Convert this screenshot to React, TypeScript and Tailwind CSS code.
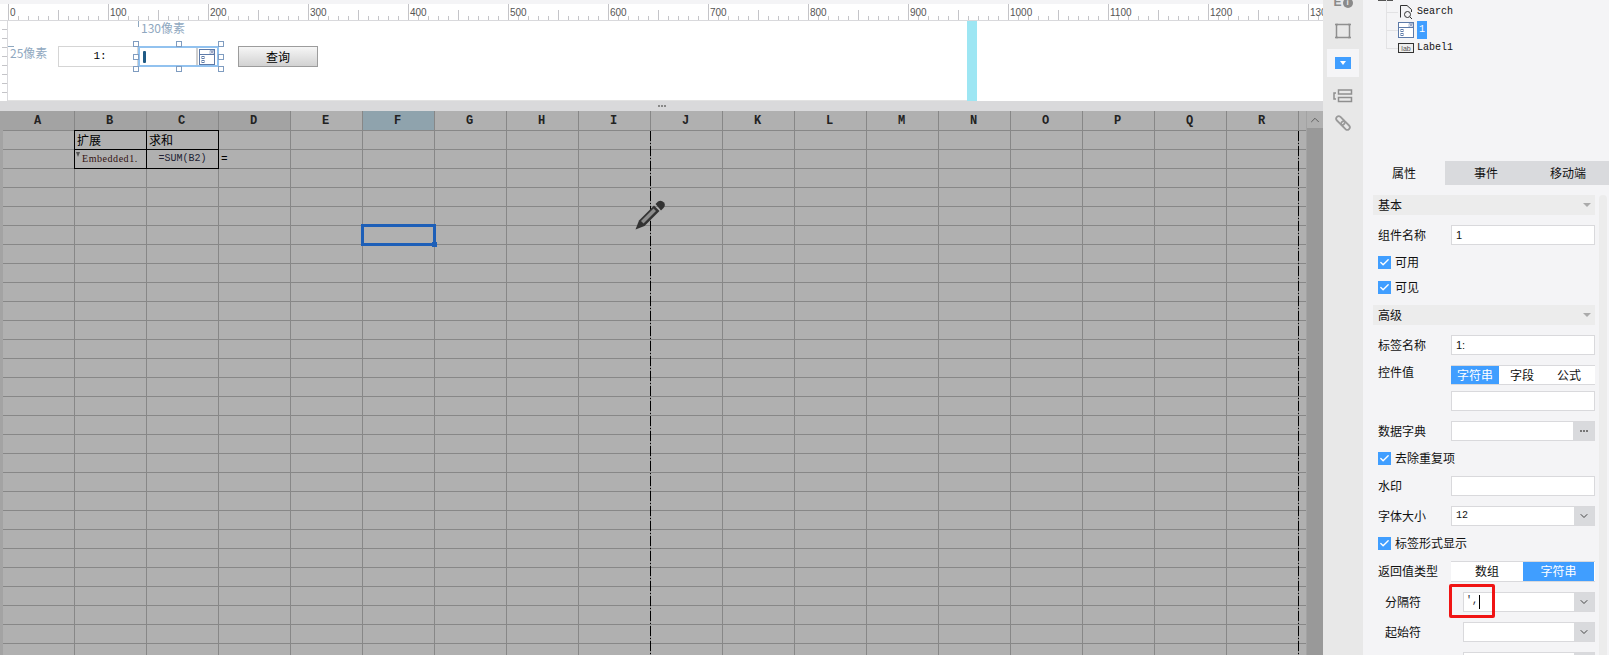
import { Check, ChevronDown, ChevronUp } from "lucide-react";

const cjk = "font-['Noto_Sans_CJK_SC',sans-serif]";
const mono = "font-['Liberation_Mono','Noto_Sans_CJK_SC',monospace]";
const dashDot =
  "absolute bottom-0 top-[20px] w-px bg-[repeating-linear-gradient(to_bottom,#000_0,#000_10px,transparent_10px,transparent_12px,#000_12px,#000_13px,transparent_13px,transparent_15px)]";

const columns = ["A", "B", "C", "D", "E", "F", "G", "H", "I", "J", "K", "L", "M", "N", "O", "P", "Q", "R"];
const rowCount = 28;
const rulerLabels = [0, 100, 200, 300, 400, 500, 600, 700, 800, 900, 1000, 1100, 1200, 1300];
const ticks = Array.from({ length: 132 }, (_, i) => i);

function TopRuler() {
  return (
    <div className="relative h-[17px] overflow-hidden border-b border-[#d9d9dc] bg-white pl-2">
      <div className="flex h-full">
        {ticks.map((t) => (
          <div key={t} className="relative w-[10px] shrink-0">
            <span
              className={
                t % 10 === 0
                  ? "absolute bottom-0 left-0 h-[16px] w-px bg-[#c4c4c8]"
                  : t % 5 === 0
                    ? "absolute bottom-0 left-0 h-[10px] w-px bg-[#c4c4c8]"
                    : "absolute bottom-0 left-0 h-[4px] w-px bg-[#c4c4c8]"
              }
            />
          </div>
        ))}
      </div>
      <div className="absolute left-2 top-0 flex">
        {rulerLabels.map((n) => (
          <span key={n} className="w-[100px] pl-[2px] font-['Liberation_Sans',sans-serif] text-[10px] leading-[17px] text-[#555]">
            {n}
          </span>
        ))}
      </div>
    </div>
  );
}

function Handle({ className }: { className: string }) {
  return <span className={`absolute h-[6px] w-[6px] border border-[#7f9cc0] bg-white ${className}`} />;
}

function ComboIcon({ className = "" }: { className?: string }) {
  return (
    <svg viewBox="0 0 16 16" className={className} fill="none">
      <rect x="0.5" y="0.5" width="15" height="15" fill="#fff" stroke="#5d7aa8" />
      <path d="M0.5 5.5H15.5" stroke="#5d7aa8" />
      <path d="M11 1.5H15V5H11z" fill="#fff" stroke="#5d7aa8" strokeWidth="0.5" />
      <path d="M11.5 2.5H14.5L13 4z" fill="#3b4f8a" />
      <rect x="3" y="7.5" width="2" height="2" stroke="#5d7aa8" />
      <rect x="3" y="11.5" width="2" height="2" stroke="#5d7aa8" />
    </svg>
  );
}

function Canvas() {
  return (
    <div className="flex h-[80px]">
      <div className="flex w-2 flex-col justify-around border-r border-[#d9d9dc] bg-white py-1 pl-[2px]">
        {[0, 1, 2, 3, 4, 5, 6, 7].map((i) => (
          <span key={i} className="h-px w-[5px] bg-[#c4c4c8]" />
        ))}
      </div>
      <div className="relative flex-1 bg-white">
        <span className={`absolute left-[133px] top-[-1px] text-[12px] leading-[16px] text-[#8fa8c0] ${cjk}`}>130像素</span>
        <span className={`absolute left-[2px] top-[24px] text-[12px] leading-[16px] text-[#8fa8c0] ${cjk}`}>25像素</span>
        <span className="absolute left-[130px] top-0 h-[6px] w-px bg-[#8fa8c0]" />
        <span className="absolute left-0 top-[25px] h-px w-[6px] bg-[#8fa8c0]" />

        <div className="flex pl-[50px] pt-[25px]">
          <div className={`flex h-[21px] w-[80px] items-center justify-center border border-[#d5d5d5] pl-[4px] text-[11px] font-normal text-black ${mono}`}>
            1:
          </div>
          <div className="relative flex h-[21px] w-[81px] items-center justify-between border-2 border-[#92c2ef] pl-[3px] pr-[1px]">
            <span className="h-[12px] w-[3px] rounded-[1px] bg-[#1f5a85]" />
            <span className="flex h-full w-[20px] items-center justify-center border-l-2 border-[#cfcfcf]">
              <ComboIcon className="h-4 w-4" />
            </span>
            <Handle className="left-[-7px] top-[-7px]" />
            <Handle className="left-[36px] top-[-7px]" />
            <Handle className="right-[-7px] top-[-7px]" />
            <Handle className="left-[-7px] top-[6px]" />
            <Handle className="right-[-7px] top-[6px]" />
            <Handle className="bottom-[-7px] left-[-7px]" />
            <Handle className="bottom-[-7px] left-[36px]" />
            <Handle className="bottom-[-7px] right-[-7px]" />
          </div>
          <button className={`ml-[19px] h-[21px] w-[80px] border border-[#9c9c9c] bg-gradient-to-b from-[#f6f6f6] to-[#d2d2d2] text-[12px] leading-none text-black ${cjk}`}>
            查询
          </button>
        </div>

        <div className="absolute bottom-0 left-0 h-px w-[959px] bg-[#e2e2e2]" />
        <div className="absolute inset-y-0 left-[959px] w-[10px] bg-[#9de6f3]" />
      </div>
    </div>
  );
}

function Cell({ col, row }: { col: string; row: number }) {
  const boxed = (col === "B" || col === "C") && (row === 0 || row === 1);
  const selected = col === "F" && row === 5;
  return (
    <div className="relative h-[19px] w-[72px] shrink-0 border-b border-r border-[#878787]">
      {boxed && <span className="absolute inset-[-1px] z-10 border border-black" />}
      {col === "B" && row === 0 && <span className={`absolute left-[2px] top-0 text-[12px] leading-[18px] text-black ${cjk}`}>扩展</span>}
      {col === "C" && row === 0 && <span className={`absolute left-[2px] top-0 text-[12px] leading-[18px] text-black ${cjk}`}>求和</span>}
      {col === "B" && row === 1 && (
        <>
          <span className="absolute left-[1px] top-[2px] h-0 w-0 border-x-[2px] border-t-[5px] border-x-transparent border-t-[#555]" />
          <span className="absolute left-[7px] top-0 font-['Liberation_Serif',serif] text-[10px] leading-[18px] tracking-[0.55px] text-[#311]">
            Embedded1.
          </span>
        </>
      )}
      {col === "C" && row === 1 && (
        <span className={`absolute inset-x-0 top-0 text-center text-[10px] leading-[18px] text-[#223] ${mono}`}>=SUM(B2)</span>
      )}
      {col === "D" && row === 1 && <span className={`absolute left-[2px] top-0 text-[11px] leading-[18px] text-black ${mono}`}>=</span>}
      {selected && (
        <span className="absolute left-[-2px] top-[-2px] z-10 h-[22px] w-[75px] border-[3px] border-[#1d5fb8]">
          <span className="absolute bottom-[-4px] right-[-4px] h-[5px] w-[5px] bg-[#1d5fb8]" />
        </span>
      )}
    </div>
  );
}

function Sheet() {
  return (
    <div className="relative flex min-h-0 flex-1 overflow-hidden bg-[#b0b0b0]">
      <div className="w-[3px] shrink-0 bg-[#a3a3a3]" />
      <div className="min-w-0 flex-1 overflow-hidden">
        <div className="flex h-[20px]">
          {columns.map((c, i) => (
            <div
              key={c}
              className={`flex h-[20px] w-[72px] shrink-0 items-center justify-center border-b border-r border-[#878787] pr-[2px] font-['Liberation_Mono',monospace] text-[12px] font-bold text-[#222] ${
                c === "F" ? "bg-[#8fa3ad]" : i < 4 ? "bg-[#a3a3a3]" : "bg-[#b0b0b0]"
              }`}
            >
              {c}
            </div>
          ))}
          <div className="w-[7px] shrink-0 border-b border-[#878787]" />
        </div>
        {Array.from({ length: rowCount }, (_, row) => (
          <div key={row} className="flex">
            {columns.map((c) => (
              <Cell key={c} col={c} row={row} />
            ))}
            <div className="h-[19px] w-[7px] shrink-0 border-b border-[#878787]" />
          </div>
        ))}
      </div>
      <div className="flex w-[17px] shrink-0 flex-col border-l border-[#a3a3a3]">
        <div className="flex h-[17px] items-center justify-center bg-[#b0b0b0] text-[#555]">
          <ChevronUp size={14} strokeWidth={1.5} />
        </div>
        <div className="flex-1 bg-[#999]" />
      </div>

      <div className={`left-[650px] ${dashDot}`} />
      <div className={`left-[1298px] ${dashDot}`} />
      <svg viewBox="0 0 32 32" className="absolute left-[633px] top-[88px] h-8 w-8" fill="#333">
        <path d="M2.5 30.5 6 21.5 21 6.5 26.5 12 11.5 27z" />
        <path d="M22.5 5 25 2.5Q28 0.5 31 3.5 33 6.5 30.5 9L28 11.5z" />
        <path d="M8 22 20.5 9.5 23 12 10.5 24.5z" fill="#8c8c8c" />
      </svg>
    </div>
  );
}

function SideTools() {
  return (
    <div className="flex w-[40px] shrink-0 flex-col items-center bg-[#e8e8e8]">
      <div className="flex h-[14px] w-full items-end justify-center gap-px overflow-hidden pb-[6px] font-['Liberation_Sans',sans-serif] text-[12px] font-bold leading-none text-[#8a8a8a]">
        E
        <span className="flex h-[10px] w-[10px] items-center justify-center rounded-full bg-[#8a8a8a] text-[8px] text-[#e8e8e8]">i</span>
      </div>
      <svg viewBox="0 0 18 18" className="mt-[8px] h-[18px] w-[18px]" fill="none" stroke="#8f8f8f" strokeWidth="1.5">
        <rect x="2.5" y="2.5" width="13" height="13" />
        <path d="M1 2.5H4M14 2.5H17M1 15.5H4M14 15.5H17" />
      </svg>
      <div className="mt-[9px] flex h-[28px] w-[32px] items-center justify-center bg-[#f5f5f7]">
        <span className="flex h-3 w-4 items-center justify-center bg-[#409eff]">
          <span className="h-0 w-0 border-x-[3px] border-t-[4px] border-x-transparent border-t-white" />
        </span>
      </div>
      <svg viewBox="0 0 20 14" className="mt-[12px] h-[14px] w-[20px]" fill="none" stroke="#8f8f8f" strokeWidth="1.5">
        <rect x="5.5" y="1" width="13" height="4" />
        <rect x="5.5" y="8.5" width="13" height="4" />
        <path d="M3 4H1V10H3" />
      </svg>
      <svg viewBox="0 0 16 16" className="mt-[12px] h-4 w-4" fill="none" stroke="#9a9a9a" strokeWidth="1.8">
        <rect x="0.5" y="3" width="10" height="5" rx="2.5" transform="rotate(45 5.5 5.5)" />
        <rect x="5.5" y="8" width="10" height="5" rx="2.5" transform="rotate(45 10.5 10.5)" />
      </svg>
    </div>
  );
}

function Tree() {
  return (
    <div className="relative h-[161px]">
      <span className="absolute left-[15px] top-0 h-px w-[15px] bg-[#555]" />
      <span className="absolute left-[23px] top-0 h-[48px] w-px bg-[#e2e2e4]" />
      <span className="absolute left-[23px] top-[12px] h-px w-[12px] bg-[#e2e2e4]" />
      <span className="absolute left-[23px] top-[30px] h-px w-[12px] bg-[#e2e2e4]" />
      <span className="absolute left-[23px] top-[48px] h-px w-[12px] bg-[#e2e2e4]" />
      <div className={`relative flex flex-col pl-[35px] pt-[3px] text-[10px] leading-none text-[#111] ${mono}`}>
        <div className="flex h-[18px] items-center">
          <svg viewBox="0 0 14 14" className="ml-[1px] h-[14px] w-[14px]" fill="none" stroke="#333">
            <path d="M1.5 12.5V0.5H8L12.5 4.5V7" />
            <circle cx="8.5" cy="9.5" r="3" />
            <path d="M11 12 13 14" />
          </svg>
          <span className="ml-[4px]">Search</span>
        </div>
        <div className="flex h-[18px] items-center">
          <ComboIcon className="h-4 w-4" />
          <span className="ml-[3px] flex h-[18px] w-[10px] items-center justify-center bg-[#409eff] text-white">1</span>
        </div>
        <div className="flex h-[18px] items-center">
          <span className="flex h-[10px] w-4 items-center justify-center border border-[#333] bg-[#eee] font-['Liberation_Sans',sans-serif] text-[7px] text-[#555]">
            lab
          </span>
          <span className="ml-[3px]">Label1</span>
        </div>
      </div>
    </div>
  );
}

function Section({ title, className = "" }: { title: string; className?: string }) {
  return (
    <div className={`flex h-5 items-center justify-between bg-[#ececec] pl-[5px] pr-[4px] text-[12px] text-[#111] ${className}`}>
      {title}
      <span className="h-0 w-0 border-x-[4px] border-t-[4px] border-x-transparent border-t-[#aaa]" />
    </div>
  );
}

function Input({ value = "", className = "" }: { value?: string; className?: string }) {
  return (
    <div className={`flex h-5 items-center border border-[#d9d9dc] bg-white pl-1 font-['Liberation_Sans',sans-serif] text-[11px] text-[#111] ${className}`}>
      {value}
    </div>
  );
}

function Row({ label, className = "", labelClass = "", indent = false, children }: { label: string; className?: string; labelClass?: string; indent?: boolean; children: React.ReactNode }) {
  return (
    <div className={`flex h-5 items-center text-[12px] text-[#111] ${className}`}>
      <span className={`${indent ? "w-[90px] shrink-0 pl-3" : "w-[78px] shrink-0 pl-[5px]"} ${labelClass}`}>{label}</span>
      <div className="min-w-0 flex-1">{children}</div>
    </div>
  );
}

function Checked({ label, className = "" }: { label: string; className?: string }) {
  return (
    <div className={`flex h-[14px] items-center pl-[5px] text-[12px] text-[#111] ${className}`}>
      <span className="flex h-[13px] w-[13px] items-center justify-center bg-[#409eff]">
        <Check size={11} strokeWidth={3} className="text-white" />
      </span>
      <span className="ml-1">{label}</span>
    </div>
  );
}

function Select({ value = "", className = "" }: { value?: string; className?: string }) {
  return (
    <div className={`flex h-5 items-stretch border border-[#d9d9dc] bg-white ${className}`}>
      <span className="flex-1 pl-1 font-['Liberation_Mono',monospace] text-[10px] leading-[18px] text-[#111]">{value}</span>
      <span className="flex w-5 items-center justify-center bg-[#d9dadd]">
        <ChevronDown size={12} className="text-[#444]" />
      </span>
    </div>
  );
}

function Props() {
  return (
    <div className={`flex-1 overflow-hidden pl-[10px] pr-[14px] pt-[10px] ${cjk}`}>
      <Section title="基本" />
      <Row label="组件名称" className="mt-[10px]">
        <Input value="1" />
      </Row>
      <Checked label="可用" className="mt-[10px]" />
      <Checked label="可见" className="mt-[11px]" />
      <Section title="高级" className="mt-[11px]" />
      <Row label="标签名称" className="mt-[10px]">
        <Input value="1:" />
      </Row>
      <Row label="控件值" className="mt-[10px]" labelClass="-mt-[6px]">
        <div className="flex h-5 items-center border-y border-[#d9d9dc] bg-white text-[12px]">
          <span className="flex h-full w-[48px] items-center justify-center bg-[#409eff] text-white">字符串</span>
          <span className="w-[46px] text-center">字段</span>
          <span className="w-[48px] text-center">公式</span>
        </div>
      </Row>
      <div className="ml-[78px] mt-[6px]">
        <Input />
      </div>
      <Row label="数据字典" className="mt-[10px]">
        <div className="flex h-5 items-stretch border border-[#d9d9dc] bg-white">
          <span className="flex-1" />
          <span className="flex w-[21px] items-center justify-center gap-px bg-[#d9dadd]">
            <span className="h-[2px] w-[2px] bg-[#777]" />
            <span className="h-[2px] w-[2px] bg-[#777]" />
            <span className="h-[2px] w-[2px] bg-[#777]" />
          </span>
        </div>
      </Row>
      <Checked label="去除重复项" className="mt-[10px]" />
      <Row label="水印" className="mt-[11px]">
        <Input />
      </Row>
      <Row label="字体大小" className="mt-[10px]">
        <Select value="12" />
      </Row>
      <Checked label="标签形式显示" className="mt-[10px]" />
      <Row label="返回值类型" className="mt-[11px]">
        <div className="flex h-[21px] border-y border-[#d9d9dc] bg-white">
          <span className="flex w-[72px] items-center justify-center">数组</span>
          <span className="flex w-[71px] items-center justify-center bg-[#409eff] text-white">字符串</span>
        </div>
      </Row>
      <Row label="分隔符" indent className="mt-[11px]">
        <div className="relative">
          <Select />
          <span className="absolute left-[3px] top-[3px] font-['Liberation_Mono',monospace] text-[10px] leading-[12px] text-[#223]">',</span>
          <span className="absolute left-[16px] top-[3px] h-[14px] w-px bg-black" />
          <span className="absolute left-[-14px] top-[-8px] h-[34px] w-[46px] rounded-[2px] border-[3px] border-[#f01414]" />
        </div>
      </Row>
      <Row label="起始符" indent className="mt-[10px]">
        <Select />
      </Row>
      <div className="ml-[90px] mt-[10px]">
        <Select />
      </div>
    </div>
  );
}

function RightPanel() {
  return (
    <div className={`flex w-[246px] shrink-0 flex-col bg-[#f4f4f6] ${cjk}`}>
      <Tree />
      <div className="flex h-6 shrink-0 bg-[#d9dadd] text-[12px] text-[#111]">
        <span className="flex w-[82px] items-center justify-center bg-[#f4f4f6]">属性</span>
        <span className="flex w-[82px] items-center justify-center">事件</span>
        <span className="flex w-[82px] items-center justify-center">移动端</span>
      </div>
      <div className="relative flex min-h-0 flex-1 flex-col">
        <Props />
        <span className="absolute bottom-0 right-[2px] top-[10px] w-2 rounded-t bg-[#ececec]" />
      </div>
    </div>
  );
}

export default function App() {
  return (
    <div className="flex h-[655px] w-[1609px] overflow-hidden bg-[#f4f4f6]">
      <div className="flex min-w-0 flex-1 flex-col">
        <div className="flex h-[101px] shrink-0 flex-col pt-1">
          <TopRuler />
          <Canvas />
        </div>
        <div className="flex h-[10px] shrink-0 items-center justify-center gap-px bg-[#d9d9db]">
          <span className="h-[2px] w-[2px] bg-[#888]" />
          <span className="h-[2px] w-[2px] bg-[#888]" />
          <span className="h-[2px] w-[2px] bg-[#888]" />
        </div>
        <Sheet />
      </div>
      <SideTools />
      <RightPanel />
    </div>
  );
}
